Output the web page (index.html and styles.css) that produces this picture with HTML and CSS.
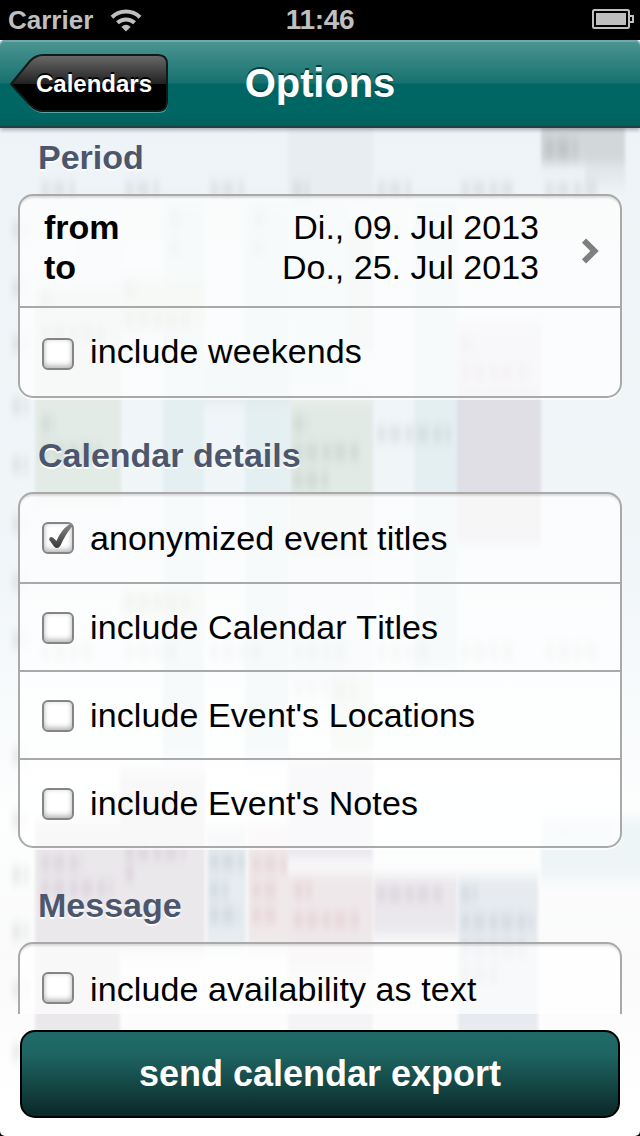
FILE: index.html
```html
<!DOCTYPE html>
<html lang="en">
<head>
  <meta charset="UTF-8">
  <title>Options</title>
  <link rel="stylesheet" href="styles.css">
</head>
<body>
  <div class="screen">
    <!-- blurred week calendar behind the options -->
    <svg class="backdrop" width="640" height="1136" viewBox="0 0 640 1136" aria-hidden="true">
      <defs>
        <linearGradient id="sky" x1="0" y1="0" x2="0" y2="1">
          <stop offset="0.1" stop-color="#edf3f6"/>
          <stop offset="0.5" stop-color="#f1f6f9"/>
          <stop offset="0.72" stop-color="#fdfefe"/>
          <stop offset="0.84" stop-color="#fafafb"/>
          <stop offset="0.97" stop-color="#ffffff"/>
        </linearGradient>
        <filter id="soft" x="0" y="0" width="640" height="1136" filterUnits="userSpaceOnUse" color-interpolation-filters="sRGB">
          <feGaussianBlur stdDeviation="1.5 6"/>
        </filter>
        <filter id="smudge" x="0" y="0" width="640" height="1136" filterUnits="userSpaceOnUse" color-interpolation-filters="sRGB">
          <feGaussianBlur stdDeviation="2.8 6"/>
        </filter>
      </defs>
      <rect width="640" height="1136" fill="url(#sky)"/>
      <g filter="url(#soft)">
        <rect x="288" y="110" width="85" height="95" fill="#e7edf1"/>
        <rect x="541" y="110" width="84" height="54" fill="#d2d7da"/>
        <rect x="585" y="164" width="40" height="20" fill="#e2e9ed"/>
        <rect x="78" y="200" width="42" height="90" fill="#e9f1f4"/>
        <rect x="163" y="200" width="41" height="560" fill="#e4eff2"/>
        <rect x="245" y="200" width="44" height="560" fill="#e4eff2"/>
        <rect x="290" y="200" width="58" height="190" fill="#e6f0f1"/>
        <rect x="348" y="220" width="25" height="130" fill="#dfe9e7"/>
        <rect x="414" y="200" width="43" height="470" fill="#e4eff2"/>
        <rect x="35" y="290" width="86" height="210" fill="#e2ebe6"/>
        <rect x="120" y="280" width="85" height="50" fill="#e4ebe4"/>
        <rect x="204" y="360" width="86" height="42" fill="#e1e9ec"/>
        <rect x="290" y="400" width="83" height="155" fill="#e1eae4"/>
        <rect x="290" y="560" width="83" height="120" fill="#e9f1f4"/>
        <rect x="457" y="325" width="84" height="75" fill="#e8e5ec"/>
        <rect x="457" y="388" width="84" height="156" fill="#dfdfe5"/>
        <rect x="120" y="590" width="85" height="26" fill="#e7ede5"/>
        <rect x="331" y="680" width="42" height="72" fill="#eaf0e8"/>
        <rect x="35" y="820" width="85" height="220" fill="#ebe8ec"/>
        <rect x="120" y="770" width="85" height="184" fill="#ebe8ec"/>
        <rect x="207" y="825" width="39" height="125" fill="#e6ecf0"/>
        <rect x="248" y="825" width="40" height="125" fill="#f0e9ea"/>
        <rect x="288" y="760" width="85" height="100" fill="#eae8ee"/>
        <rect x="288" y="872" width="85" height="98" fill="#efe8ea"/>
        <rect x="288" y="970" width="85" height="70" fill="#f4f4f6"/>
        <rect x="374" y="876" width="83" height="60" fill="#ebe8ed"/>
        <rect x="458" y="876" width="80" height="164" fill="#e7ebf0"/>
        <rect x="541" y="818" width="110" height="62" fill="#edf5f7"/>
      </g>
      <g class="smudges" filter="url(#smudge)">
        <path d="M41 190h34M125 190h34M210 190h34M293 190h16M377 190h34M461 190h52M545 190h52"/>
        <path d="M12 230h16M12 288h16M12 344h16M12 406h16M12 465h16M12 524h16M12 582h16M12 640h16M12 756h16M12 820h16M12 875h16M12 932h16M12 990h16M12 1052h16"/>
        <path d="M41 300h14M125 290h14M125 320h66M41 333h64M170 218h14M170 248h14M254 218h14M254 248h14"/>
        <path d="M41 424h14M41 452h60M294 424h14M294 452h68M294 480h34M377 434h74"/>
        <path d="M41 652h52M125 652h52M210 652h52M294 652h52M377 652h52M461 652h52M545 652h52M125 602h66M294 690h62"/>
        <path d="M545 832h64" class="faint"/>
      </g>
      <g class="smudges mauve" filter="url(#smudge)">
        <path d="M461 345h14M461 372h70M41 863h42M41 888h72M125 852h60M125 874h10"/>
        <path d="M377 894h68"/>
      </g>
      <g class="smudges red" filter="url(#smudge)">
        <path d="M252 864h34M252 890h24M252 915h26M294 890h18M294 920h66"/>
      </g>
      <g class="smudges blue" filter="url(#smudge)">
        <path d="M210 862h34M210 890h18M210 915h30M461 894h16M461 922h72M461 950h66M461 975h40"/>
        <path d="M545 149h32" class="dark"/>
      </g>
    </svg>

    <div class="status-bar">
      <div class="carrier">
        <span>Carrier</span>
        <svg width="32" height="24" viewBox="0 0 32 24">
          <g fill="none" stroke="#bfbfbf" stroke-width="4">
            <path d="M2 9.200A20.3 20.3 0 0 1 30 9.200"/>
            <path d="M7.400 14.800A12.600 12.600 0 0 1 24.600 14.800"/>
          </g>
          <path d="M11.400 19Q16 14.400 20.600 19L16 23.600Z" fill="#bfbfbf"/>
        </svg>
      </div>
      <div class="clock">11:46</div>
      <svg class="battery" width="42" height="20" viewBox="0 0 42 20">
        <rect x="1" y="1" width="36" height="18" rx="1.5" fill="none" stroke="#bfbfbf" stroke-width="2"/>
        <rect x="4" y="4" width="30" height="12" fill="#bfbfbf"/>
        <path d="M38 7h3v6h-3" fill="none" stroke="#bfbfbf" stroke-width="2"/>
      </svg>
    </div>

    <div class="nav-bar">
      <button class="back">
        <svg width="160" height="62" viewBox="0 0 160 62">
          <defs>
            <linearGradient id="gloss" x1="0" y1="0" x2="0" y2="1">
              <stop offset="0" stop-color="#6a6a6a"/>
              <stop offset="0.51" stop-color="#222"/>
              <stop offset="0.52" stop-color="#000"/>
              <stop offset="1" stop-color="#000"/>
            </linearGradient>
          </defs>
          <path d="M2 32L20 10Q26 4 34 4H148Q158 4 158 13V50Q158 60 148 60H34Q26 60 20 54Z" fill="#5aa29f"/>
          <path d="M1 31L20 8Q26 2 33 2H148Q157 2 157 11V48Q157 58 148 58H33Q26 58 20 52Z" fill="url(#gloss)" stroke="#101a1a" stroke-width="2"/>
        </svg>
        <span>Calendars</span>
      </button>
      <h1>Options</h1>
    </div>

    <div class="options">
      <h2>Period</h2>
      <div class="card">
        <div class="period">
          <div class="dates">
            <b>from</b><span>Di., 09. Jul 2013</span>
            <b>to</b><span>Do., 25. Jul 2013</span>
          </div>
          <svg width="18" height="26" viewBox="0 0 18 26">
            <path d="M2 2.500L12.500 13L2 23.500" fill="none" stroke="#7f7f7f" stroke-width="6"/>
          </svg>
        </div>
        <div class="row"><i class="box"></i>include weekends</div>
      </div>

      <h2>Calendar details</h2>
      <div class="card">
        <div class="row first">
          <i class="box">
            <svg width="32" height="32" viewBox="0 0 32 32">
              <defs>
                <linearGradient id="tick" x1="0" y1="0" x2="0" y2="1">
                  <stop offset="0" stop-color="#888"/>
                  <stop offset="1" stop-color="#383838"/>
                </linearGradient>
              </defs>
              <path d="M7 17.500Q8 13.500 11.500 16L14.500 19Q19 8 27 2.500Q30 1 30.500 4Q23 13 18.500 23.500Q15.500 28 12 24.500Z" fill="url(#tick)"/>
            </svg>
          </i>anonymized event titles
        </div>
        <div class="row"><i class="box"></i>include Calendar Titles</div>
        <div class="row"><i class="box"></i>include Event's Locations</div>
        <div class="row"><i class="box"></i>include Event's Notes</div>
      </div>

      <h2>Message</h2>
      <div class="card">
        <div class="row first message"><i class="box"></i>include availability as text</div>
      </div>
    </div>

    <div class="footer">
      <button class="send">send calendar export</button>
    </div>
  </div>
</body>
</html>
```
FILE: styles.css
```css
* {
  box-sizing: border-box;
}

body {
  margin: 0;
  background: #000;
  font-family: "Liberation Sans", Arial, sans-serif;
  font-size: 34px;
  color: #000;
}

h1, h2 {
  margin: 0;
}

button {
  border: none;
  padding: 0;
  font-family: inherit;
  font-weight: bold;
  color: #fff;
}

.screen {
  position: relative;
  width: 640px;
  height: 1136px;
  display: flex;
  flex-direction: column;
  overflow: hidden;
  border-radius: 0 0 5px 5px;
}

.backdrop {
  position: absolute;
  top: 0;
  left: 0;
  z-index: -1;
}

.smudges {
  fill: none;
  stroke: #60706c;
  stroke-width: 16;
  stroke-dasharray: 9 3 12 4;
  opacity: 0.12;
}

.smudges .faint {
  opacity: 0.4;
}

.smudges.mauve {
  stroke: #80607c;
}

.smudges.red {
  stroke: #b06070;
}

.smudges.blue {
  stroke: #49688a;
}

.smudges .dark {
  stroke: #444;
  stroke-width: 22;
}

/* status bar */
.status-bar {
  height: 40px;
  padding: 0 6px 0 8px;
  display: grid;
  grid-template-columns: 1fr auto 1fr;
  align-items: center;
  background: #000;
  color: #bfbfbf;
  font-size: 26px;
  font-weight: bold;
  line-height: 40px;
}

.carrier {
  display: flex;
  align-items: center;
  gap: 17px;
}

.carrier svg {
  margin-top: -1px;
}

.clock {
  margin-right: 2px;
  font-size: 28px;
  letter-spacing: -0.3px;
}

.battery {
  justify-self: end;
  margin-top: -2px;
}

/* navigation bar */
.nav-bar {
  height: 88px;
  padding: 13px 10px 0;
  display: grid;
  grid-template-columns: 160px 1fr 160px;
  border-bottom: 2px solid #20413f;
  border-radius: 5px 5px 0 0;
  background: linear-gradient(#4d9693, #17716e 43px, #006663 44px, #006663 76px, #055d5a);
  box-shadow: inset 0 2px 0 #70aaa8, 0 2px 4px rgba(0, 0, 0, 0.3);
}

.back {
  position: relative;
  width: 160px;
  height: 62px;
  background: none;
  font-size: 24px;
  text-shadow: 0 -2px 0 #000;
}

.back svg {
  position: absolute;
  top: 0;
  left: 0;
}

.back span {
  position: relative;
  display: block;
  padding-left: 8px;
  line-height: 58px;
}

.nav-bar h1 {
  font-size: 40px;
  line-height: 60px;
  color: #fff;
  text-align: center;
  letter-spacing: -0.1px;
  text-shadow: 0 -2px 0 #00403e;
}

/* option groups */
.options {
  height: 886px;
  padding: 0 18px;
  overflow: hidden;
}

.options h2 {
  height: 66px;
  padding-left: 20px;
  font-size: 34px;
  line-height: 58px;
  color: #4c566c;
  text-shadow: 0 2px 0 #fff;
}

.card + h2 {
  height: 94px;
  line-height: 114px;
}

.card {
  border: 2px solid #a9a9a9;
  border-radius: 15px;
  background: rgba(255, 255, 255, 0.7);
  box-shadow: 0 2px 0 rgba(255, 255, 255, 0.7), inset 0 3px 2px -1px rgba(0, 0, 0, 0.12);
}

.period {
  height: 110px;
  padding: 11px 20px 0 24px;
  display: grid;
  grid-template-columns: 495px 18px;
  justify-content: space-between;
}

.dates {
  display: grid;
  grid-template-columns: auto 1fr;
  grid-auto-rows: 40px;
  line-height: 40px;
}

.dates span {
  text-align: right;
}

.period svg {
  margin-top: 31px;
}

.row {
  height: 88px;
  padding: 2px 22px 0;
  display: flex;
  gap: 16px;
  border-top: 2px solid #a9a9a9;
  line-height: 82px;
  letter-spacing: 0.1px;
  font-kerning: none;
}

.period + .row {
  height: 90px;
  line-height: 86px;
  padding-top: 0;
}

.row.first {
  height: 88px;
  padding-top: 0;
  border-top: none;
  line-height: 88px;
}

.row.message {
  line-height: 90px;
}

.box {
  flex: none;
  width: 32px;
  height: 32px;
  margin-top: 26px;
  border: 2px solid #858585;
  border-radius: 6px;
  background: #fff;
  box-shadow: inset 0 -3px 5px rgba(0, 0, 0, 0.22), inset 0 0 5px rgba(0, 0, 0, 0.12);
}

.period + .row .box {
  margin-top: 30px;
}

.first .box {
  margin-top: 28px;
}

.box svg {
  display: block;
  margin: -2px;
}

/* bottom button */
.footer {
  height: 122px;
  padding: 16px 20px;
}

.send {
  width: 600px;
  height: 88px;
  border: 2px solid #000;
  border-radius: 15px;
  background: linear-gradient(#1e6a67, #1e6663 25%, #0c2c2c 95%, #0b2a2a);
  font-size: 36px;
}
```
